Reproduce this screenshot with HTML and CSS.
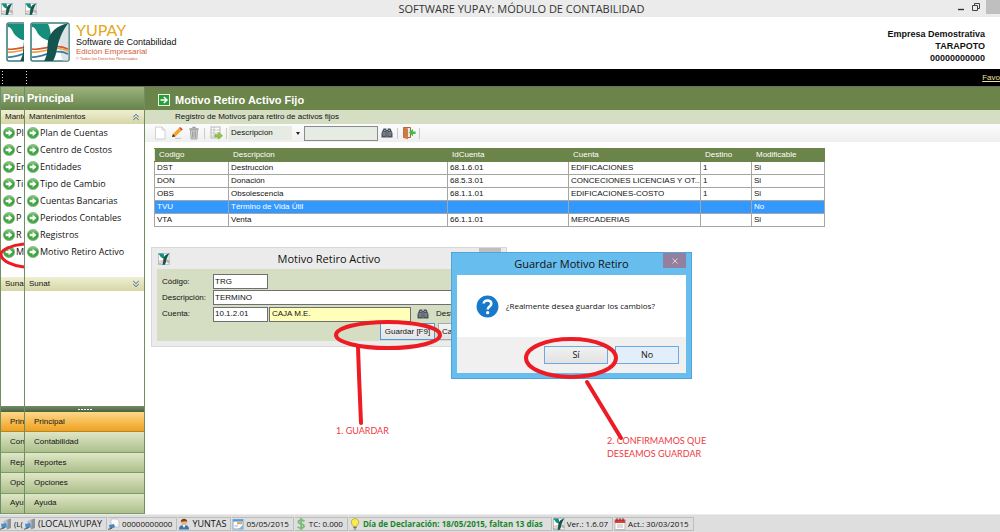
FILE: index.html
```html
<!DOCTYPE html>
<html lang="es">
<head>
<meta charset="utf-8">
<title>SOFTWARE YUPAY: MÓDULO DE CONTABILIDAD</title>
<link rel="stylesheet" href="styles.css">
</head>
<body>
<svg class="defs" aria-hidden="true">
  <defs>
    <linearGradient id="gball" x1="0" y1="0" x2="0" y2="1"><stop offset="0" stop-color="#8fcf86"/><stop offset=".5" stop-color="#2f9a36"/><stop offset="1" stop-color="#4cb34c"/></linearGradient>
    <symbol id="logo" viewBox="0 0 40 40">
      <rect x="1" y="1" width="38" height="38" rx="2" fill="#fff" stroke="#3d7f7c" stroke-width="1.6"/>
      <path d="M37 2 H38.4 V38.4 H33 C29 30 28 20 32 10Z" fill="#dde3e5"/>
      <path d="M2 27 C13 29 24 20 38 27" fill="none" stroke="#d8572c" stroke-width="1.7"/>
      <path d="M2 30 C13 32 24 22 38 29" fill="none" stroke="#eda13b" stroke-width="1.7"/>
      <path d="M2 35 C14 36 24 25 38 32" fill="none" stroke="#377aa8" stroke-width="1.7"/>
      <path d="M2 2 H18 C20 6 21 11 21 19 C14 18 9 14 7 10 C6 7 4 5 2 5Z" fill="#178d7b"/>
      <path d="M38 1.4 C32 9 29 18 27 27 C26 32 25 36 23 39 H14 C18 33 17 26 18 19 C20 10 27 3 38 1.4Z" fill="#14564f"/>
    </symbol>
    <symbol id="go" viewBox="0 0 12 12">
      <circle cx="6" cy="6" r="5.6" fill="url(#gball)" stroke="#7fae7b" stroke-width=".7"/>
      <path d="M2.6 4.8 H5.6 V2.8 L9.6 6 L5.6 9.2 V7.2 H2.6Z" fill="#fff"/>
    </symbol>
    <symbol id="bino" viewBox="0 0 12 12">
      <path d="M2.5 1.5 H5.4 V3 H6.6 V1.5 H9.5 L11.5 6 V10.5 H.5 V6Z" fill="#4d535c"/>
      <path d="M1.5 6 H4.8 M7.2 6 H10.5 M2 8 H4.6 M7.4 8 H10 M3 3.6 H4.6 M7.4 3.6 H9" stroke="#a9b0ba" stroke-width=".9"/><path d="M6 4 V10.5" stroke="#8f969e" stroke-width=".8"/>
    </symbol>
    <symbol id="server" viewBox="0 0 12 12">
      <path d="M6 2 L11 0.5 V10 L7 11.5Z" fill="#8c949c"/><path d="M3.5 3 L7.5 2 V9 L4 10Z" fill="#b6bdc4"/>
      <path d="M1 6 L6 5 L7 9 L2 11Z" fill="#4f8fc6"/><path d="M0 11.3 L5 9.5" stroke="#555c66"/>
    </symbol>
    <symbol id="doc" viewBox="0 0 12 12">
      <path d="M3 1 H9 L11 3 V9 H3Z" fill="#fafafa" stroke="#aab3bb" stroke-width=".6"/>
      <path d="M1 7 L6 6 L7 9 L2 11.4Z" fill="#4a86bd"/><path d="M0 11.5 L4 10" stroke="#4c5866"/>
    </symbol>
    <symbol id="user" viewBox="0 0 12 12">
      <path d="M1 11.5 C1 8 3 7 6 7 S11 8 11 11.5Z" fill="#3f74ae"/><path d="M4.5 7 L6 10 L7.5 7Z" fill="#fff"/>
      <circle cx="6" cy="4" r="3" fill="#edb27c"/><path d="M2.8 4 C2.4 -.4 9.6 -.4 9.2 4 C8 2.5 5 3.6 2.8 4Z" fill="#7d3f17"/>
    </symbol>
    <symbol id="cal" viewBox="0 0 12 12">
      <rect x="1" y="1.5" width="10" height="9.5" fill="#fff" stroke="#6ba2cf" stroke-width=".9"/><path d="M1 2.6 H11" stroke="#5c9ad0" stroke-width="2"/>
      <path d="M5 5.2 H10" stroke="#e79a4a" stroke-width="2"/><path d="M2.5 8 H6" stroke="#a8cbe6" stroke-width="1.4"/><path d="M6.5 11 L11 7 V11Z" fill="#7fb2dc"/>
    </symbol>
    <symbol id="dollar" viewBox="0 0 12 12">
      <path d="M9.5 3.2 C8 1.8 3.4 1.6 3.4 4 C3.4 6.3 9 5.4 9 8 C9 10.6 4 10.3 2.6 8.8 M6.2 0 V12" fill="none" stroke="#7dbb7d" stroke-width="1.9"/>
    </symbol>
    <symbol id="bulb" viewBox="0 0 12 12">
      <path d="M6 .6 C9 .6 10 3 9.6 5 C9 7 7.8 7.2 7.6 8.6 H4.4 C4.2 7.2 3 7 2.4 5 C2 3 3 .6 6 .6Z" fill="#f8ed4d" stroke="#a79c25" stroke-width=".7"/>
      <path d="M4.4 9.4 H7.6 M4.8 11 H7.2" stroke="#6b6f74" stroke-width="1.1"/>
    </symbol>
    <symbol id="calred" viewBox="0 0 12 12">
      <rect x="1" y="2" width="10" height="9.4" fill="#fafafa" stroke="#b9a3a3" stroke-width=".7"/><path d="M.8 1.6 H11.2 V5 H.8Z" fill="#d9403b"/>
      <path d="M3 .2 V3 M6 .2 V3 M9 .2 V3" stroke="#7c2020"/><path d="M3 7 H9 M3 9 H9" stroke="#bbb"/>
    </symbol>
    <symbol id="page" viewBox="0 0 14 14"><path d="M2.5 1 H9 L12 4 V13 H2.5Z" fill="#fff" stroke="#d0d0d0"/><path d="M9 1 V4 H12" fill="none" stroke="#d0d0d0"/></symbol>
    <symbol id="pencil" viewBox="0 0 14 14">
      <path d="M2 11 L3 8 L9 2 L11.6 4.6 L5.4 10.4Z" fill="#f2a52c"/><path d="M9 2 L10.2 .9 L12.8 3.4 L11.6 4.6Z" fill="#d63f2c"/>
      <path d="M2 11 L3 8 L5.4 10.4Z" fill="#3b3023"/><path d="M5 12.4 H11" stroke="#c5c5c5"/>
    </symbol>
    <symbol id="trash" viewBox="0 0 14 14"><path d="M3.4 4 H10.6 L10 13 H4Z" fill="#cfcfcf" stroke="#9a9a9a" stroke-width=".8"/><path d="M2.4 3 H11.6 M5.4 1.4 H8.6" stroke="#9a9a9a" stroke-width="1.4"/><path d="M5.5 5.4 V11.6 M7 5.4 V11.6 M8.5 5.4 V11.6" stroke="#8e8e8e" stroke-width=".7"/></symbol>
    <symbol id="export" viewBox="0 0 14 14"><rect x="2" y="1" width="9" height="11" fill="#fff" stroke="#b5bab5"/><path d="M2 4 H11 M2 7 H11 M2 10 H8 M5 1 V12" stroke="#b5bab5" stroke-width=".8"/><path d="M6 8.4 H9.4 V6.4 L13.6 9.7 L9.4 13 V11 H6Z" fill="#94c83d" stroke="#6a9c22" stroke-width=".5"/></symbol>
    <symbol id="exit" viewBox="0 0 14 14"><path d="M1.5 1.5 H8.5 V11.5 H1.5Z" fill="#f0e6dc" stroke="#a8683c"/><path d="M1.5 1.5 L6 2.6 V13.2 L1.5 12Z" fill="#cf7a45"/><path d="M13.6 5.4 H11 V3 L6.8 6.6 L11 10.2 V8 H13.6Z" fill="#3fbf49"/></symbol>
    <symbol id="up" viewBox="0 0 8 8"><path d="M1.2 4 L4 1.4 L6.8 4 M1.2 7 L4 4.4 L6.8 7" fill="none" stroke="#4668a8"/></symbol>
    <symbol id="down" viewBox="0 0 8 8"><path d="M1.2 1 L4 3.6 L6.8 1 M1.2 4 L4 6.6 L6.8 4" fill="none" stroke="#4668a8"/></symbol>
  </defs>
</svg>

<div class="screen">
  <div class="app strip" aria-hidden="true">
    <div class="titlebar"><svg class="i12"><use href="#logo"/></svg></div>
    <div class="brandbar"><svg class="biglogo"><use href="#logo"/></svg></div>
    <div class="blackbar"><span class="grip"></span></div>
    <div class="body">
      <div class="sidebar">
        <div class="side-title">Prin</div>
        <div class="side-sec">Mante</div>
        <ul class="side-list">
          <li><svg class="i12"><use href="#go"/></svg>Pl</li>
          <li><svg class="i12"><use href="#go"/></svg>C</li>
          <li><svg class="i12"><use href="#go"/></svg>Er</li>
          <li><svg class="i12"><use href="#go"/></svg>Ti</li>
          <li><svg class="i12"><use href="#go"/></svg>C</li>
          <li><svg class="i12"><use href="#go"/></svg>P</li>
          <li><svg class="i12"><use href="#go"/></svg>R</li>
          <li><svg class="i12"><use href="#go"/></svg>M</li>
        </ul>
        <div class="side-sec">Suna</div>
        <div class="side-fill"></div>
        <div class="splitter"></div>
        <div class="side-nav">
          <div class="nav-btn on">Prin</div>
          <div class="nav-btn">Con</div>
          <div class="nav-btn">Rep</div>
          <div class="nav-btn">Opc</div>
          <div class="nav-btn">Ayu</div>
        </div>
      </div>
    </div>
    <div class="status"><span class="cell"><svg class="i12"><use href="#server"/></svg>(L(</span></div>
  </div>

  <div class="app main">
    <header class="titlebar">
      <svg class="i12"><use href="#logo"/></svg>
      <h1 class="app-title">SOFTWARE YUPAY: MÓDULO DE CONTABILIDAD</h1>
      <div class="winctl">
        <button type="button" class="ctl" aria-label="Minimizar"><svg class="i10" viewBox="0 0 10 10"><path d="M2 7.5 H8" stroke="#333" stroke-width="1.4"/></svg></button>
        <button type="button" class="ctl" aria-label="Restaurar"><svg class="i10" viewBox="0 0 10 10"><path d="M1.5 3.5 H6.5 V8.5 H1.5Z M3.5 3 V1.5 H8.5 V6.5 H7" fill="none" stroke="#444"/></svg></button>
        <button type="button" class="ctl close" aria-label="Cerrar"></button>
      </div>
    </header>
    <div class="brandbar">
      <svg class="biglogo"><use href="#logo"/></svg>
      <div class="brand">
        <span class="b1">YUPAY</span>
        <span class="b2">Software de Contabilidad</span>
        <span class="b3">Edición Empresarial</span>
        <span class="b4">© Todos los Derechos Reservados</span>
      </div>
      <div class="company"><span>Empresa Demostrativa</span><span>TARAPOTO</span><span>00000000000</span></div>
    </div>
    <div class="blackbar"><span class="grip"></span><a class="fav" href="#">Favo</a></div>
    <div class="body">
      <nav class="sidebar">
        <div class="side-title">Principal</div>
        <div class="side-sec">Mantenimientos<svg class="i8"><use href="#up"/></svg></div>
        <ul class="side-list">
          <li><svg class="i12"><use href="#go"/></svg><a href="#">Plan de Cuentas</a></li>
          <li><svg class="i12"><use href="#go"/></svg><a href="#">Centro de Costos</a></li>
          <li><svg class="i12"><use href="#go"/></svg><a href="#">Entidades</a></li>
          <li><svg class="i12"><use href="#go"/></svg><a href="#">Tipo de Cambio</a></li>
          <li><svg class="i12"><use href="#go"/></svg><a href="#">Cuentas Bancarias</a></li>
          <li><svg class="i12"><use href="#go"/></svg><a href="#">Periodos Contables</a></li>
          <li><svg class="i12"><use href="#go"/></svg><a href="#">Registros</a></li>
          <li><svg class="i12"><use href="#go"/></svg><a href="#">Motivo Retiro Activo</a></li>
        </ul>
        <div class="side-sec">Sunat<svg class="i8"><use href="#down"/></svg></div>
        <div class="side-fill"></div>
        <div class="splitter"><span class="dots"></span></div>
        <div class="side-nav">
          <button type="button" class="nav-btn on">Principal</button>
          <button type="button" class="nav-btn">Contabilidad</button>
          <button type="button" class="nav-btn">Reportes</button>
          <button type="button" class="nav-btn">Opciones</button>
          <button type="button" class="nav-btn">Ayuda</button>
        </div>
      </nav>
      <main class="content">
        <h2 class="page-title"><svg class="i12" viewBox="0 0 12 12"><rect x=".5" y=".5" width="11" height="11" fill="#28a03a" stroke="#e6f3e4"/><path d="M2.5 6 H8.6 M5.8 3 L9 6 L5.8 9" fill="none" stroke="#fff" stroke-width="1.5"/></svg>Motivo Retiro Activo Fijo</h2>
        <p class="page-sub">Registro de Motivos para retiro de activos fijos</p>
        <div class="toolbar">
          <button type="button" class="tool" aria-label="Nuevo"><svg class="i14"><use href="#page"/></svg></button>
          <button type="button" class="tool" aria-label="Editar"><svg class="i14"><use href="#pencil"/></svg></button>
          <button type="button" class="tool" aria-label="Eliminar"><svg class="i14"><use href="#trash"/></svg></button>
          <span class="sep"></span>
          <button type="button" class="tool" aria-label="Exportar"><svg class="i14"><use href="#export"/></svg></button>
          <span class="sep"></span>
          <span class="combo"><select class="field" aria-label="Campo"><option>Descripcion</option></select></span>
          <input class="search" type="text" aria-label="Buscar">
          <button type="button" class="tool" aria-label="Buscar"><svg class="i12"><use href="#bino"/></svg></button>
          <span class="sep"></span>
          <button type="button" class="tool" aria-label="Salir"><svg class="i14"><use href="#exit"/></svg></button>
          <span class="sep"></span>
        </div>
        <table class="grid">
          <colgroup><col class="c1"><col class="c2"><col class="c3"><col class="c4"><col class="c5"><col class="c6"></colgroup>
          <thead><tr><th>Codigo</th><th>Descripcion</th><th>IdCuenta</th><th>Cuenta</th><th>Destino</th><th>Modificable</th></tr></thead>
          <tbody>
            <tr><td>DST</td><td>Destrucción</td><td>68.1.6.01</td><td>EDIFICACIONES</td><td>1</td><td>Si</td></tr>
            <tr><td>DON</td><td>Donación</td><td>68.5.3.01</td><td>CONCECIONES LICENCIAS Y OT...</td><td>1</td><td>Si</td></tr>
            <tr><td>OBS</td><td>Obsolescencia</td><td>68.1.1.01</td><td>EDIFICACIONES-COSTO</td><td>1</td><td>Si</td></tr>
            <tr class="sel"><td>TVU</td><td>Término de Vida Útil</td><td></td><td></td><td></td><td>No</td></tr>
            <tr><td>VTA</td><td>Venta</td><td>66.1.1.01</td><td>MERCADERIAS</td><td></td><td>Si</td></tr>
          </tbody>
        </table>
      </main>
    </div>
    <footer class="status">
      <span class="cell word"><svg class="i12"><use href="#server"/></svg>(LOCAL)\YUPAY</span>
      <span class="cell"><svg class="i12"><use href="#doc"/></svg>00000000000</span>
      <span class="cell word"><svg class="i12"><use href="#user"/></svg>YUNTAS</span>
      <span class="cell"><svg class="i12"><use href="#cal"/></svg>05/05/2015</span>
      <span class="cell"><svg class="i12"><use href="#dollar"/></svg>TC: 0.000</span>
      <span class="cell due"><svg class="i12"><use href="#bulb"/></svg>Día de Declaración: 18/05/2015, faltan 13 días</span>
      <span class="cell"><svg class="i12"><use href="#logo"/></svg>Ver.: 1.6.07</span>
      <span class="cell"><svg class="i12"><use href="#calred"/></svg>Act.: 30/03/2015</span>
    </footer>
  </div>

  <section class="win edit" aria-label="Motivo Retiro Activo">
    <div class="win-head"><svg class="i12"><use href="#logo"/></svg><h3 class="win-title">Motivo Retiro Activo</h3><button type="button" class="win-x" aria-label="Cerrar"></button></div>
    <form class="form">
      <div class="row"><label class="lab" for="cod">Código:</label><input class="inp short" id="cod" type="text" value="TRG"></div>
      <div class="row"><label class="lab" for="des">Descripción:</label><input class="inp wide" id="des" type="text" value="TERMINO"></div>
      <div class="row"><label class="lab" for="cta">Cuenta:</label><input class="inp short" id="cta" type="text" value="10.1.2.01"><input class="inp name" type="text" aria-label="Nombre de cuenta" value="CAJA M.E."><button type="button" class="tool find" aria-label="Buscar cuenta"><svg class="i12"><use href="#bino"/></svg></button><span class="dest">Dest</span></div>
      <div class="row acts"><button type="button" class="btn focus">Guardar [F9]</button><button type="button" class="btn cancel" aria-label="Cancelar">Ca</button></div>
    </form>
  </section>

  <section class="win confirm" role="dialog" aria-label="Guardar Motivo Retiro">
    <div class="c-head"><h3 class="win-title">Guardar Motivo Retiro</h3><button type="button" class="c-x" aria-label="Cerrar"><svg class="i8" viewBox="0 0 8 8"><path d="M1.5 1.5 L6.5 6.5 M6.5 1.5 L1.5 6.5" stroke="#e5ced8"/></svg></button></div>
    <div class="c-body">
      <svg class="ask" viewBox="0 0 24 24" aria-hidden="true"><circle cx="12" cy="12" r="11.4" fill="#1979ca"/><path d="M8 8.8 C8 4.6 16 4.6 16 9 C16 12 12.2 11.8 12.2 15" fill="none" stroke="#fff" stroke-width="2.6"/><circle cx="12.2" cy="18.4" r="1.7" fill="#fff"/></svg>
      <p class="msg">¿Realmente desea guardar los cambios?</p>
    </div>
    <div class="c-foot"><button type="button" class="cbtn yes">Sí</button><button type="button" class="cbtn no">No</button></div>
  </section>

  <p class="note n1">1. GUARDAR</p>
  <p class="note n2">2. CONFIRMAMOS QUE<br>DESEAMOS GUARDAR</p>
  <svg class="marks" width="1000" height="532" viewBox="0 0 1000 532" aria-hidden="true">
    <g fill="none" stroke="#ed1c24" stroke-width="4" stroke-linecap="round">
      <path d="M24 244 C12 245 0 250 1 255 C2 261 13 266 24 267" stroke-linecap="butt" stroke-width="3"/>
      <ellipse cx="388" cy="335" rx="52" ry="13"/>
      <path d="M358 347 L359 375 L361 423"/>
      <ellipse cx="571" cy="358" rx="45" ry="19"/>
      <path d="M587 382 L621 438"/>
    </g>
  </svg>
</div>
</body>
</html>
```
FILE: styles.css
```css
* { box-sizing: border-box; }
body { margin: 0; background: #fff; color: #111; font-family: "Liberation Sans", Arial, sans-serif; font-size: 8px; line-height: 12px; }
h1, h2, h3, p, ul { margin: 0; padding: 0; font-weight: normal; }
ul { list-style: none; }
button, input, select { font: inherit; color: inherit; margin: 0; padding: 0; border: 0; border-radius: 0; background: none; }
a { color: inherit; text-decoration: none; }
svg { flex: none; display: block; }
.defs { position: absolute; width: 0; height: 0; }
.i8 { width: 8px; height: 8px; }
.i10 { width: 10px; height: 10px; }
.i12 { width: 12px; height: 12px; }
.i14 { width: 14px; height: 14px; }

.screen { position: relative; display: flex; height: 100vh; min-height: 532px; overflow: hidden; }
.app { display: flex; flex-direction: column; min-width: 0; overflow: hidden; }
.strip { flex: none; width: 24px; white-space: nowrap; }
.main { flex: 1; }

.titlebar { flex: none; display: grid; grid-template-columns: 62px 1fr 44px; align-items: center; height: 17px; padding-left: 1px; background: #ebebeb; }
.app-title { font-family: "Open Sans", sans-serif; font-size: 11px; line-height: 16px; text-align: center; color: #333; }
.winctl { display: flex; height: 17px; align-items: flex-start; }
.ctl { flex: none; width: 10px; height: 14px; margin-right: 5px; display: grid; place-items: center; }
.ctl.close { flex: 1; margin: 0; background: #bfbfbf; }

.brandbar { flex: none; display: flex; height: 52px; padding: 5px 15px 0 6px; background: #fff; }
.biglogo { width: 40px; height: 40px; }
.brand { display: flex; flex-direction: column; flex: 1; padding: 1px 0 0 6px; }
.b1 { font-family: Lato, sans-serif; font-size: 16px; line-height: 14px; color: #e2a820; }
.b2 { font-size: 9px; line-height: 10px; }
.b3 { font-size: 8px; line-height: 9px; color: #d3603c; }
.b4 { font-size: 4px; line-height: 5px; color: #d3603c; }
.company { display: flex; flex-direction: column; padding-top: 6px; text-align: right; font-weight: bold; font-size: 9px; }

.blackbar { flex: none; display: flex; align-items: center; justify-content: space-between; height: 18px; padding-left: 2px; background: #000; border-bottom: 1px solid #6b6b6b; }
.grip { width: 1px; height: 14px; background: repeating-linear-gradient(#ddd 0 1px, #000 1px 3px); }
.fav { color: #e9e69a; text-decoration: underline; }

.body { flex: 1; display: flex; min-height: 0; }
.sidebar { flex: none; display: flex; flex-direction: column; width: 121px; border-left: 1px solid #6f8f63; border-right: 1px solid #6f8f63; }
.strip .sidebar { flex: 1; width: auto; border-right: 0; overflow: hidden; }
.side-title { height: 23px; padding-left: 2px; font-weight: bold; font-size: 11px; line-height: 22px; color: #fff; background: linear-gradient(#9db27c, #66834c); }
.side-sec { display: flex; align-items: center; justify-content: space-between; height: 14px; padding: 0 4px; background: linear-gradient(#efeed2, #d6d7a6); }
.side-list { height: 153px; font-family: "Open Sans", sans-serif; font-size: 9px; }
.side-list li { display: flex; align-items: center; gap: 1px; height: 17px; padding-left: 2px; }
.side-fill { flex: 1; }
.splitter { display: grid; place-items: center; height: 6px; background: linear-gradient(#758c6b, #47613f); }
.dots { width: 14px; height: 1px; background: repeating-linear-gradient(90deg, #fff 0 2px, transparent 2px 3px); }
.side-nav { display: flex; flex-direction: column; height: 102px; }
.nav-btn { flex: 1; display: flex; align-items: center; padding-left: 9px; border-bottom: 1px solid #7d9a6b; background: linear-gradient(#dfe7c6, #adbf8c); text-align: left; }
.nav-btn.on { background: linear-gradient(#fdd888, #efa120); border-color: #b5852c; }

.content { flex: 1; min-width: 0; }
.page-title { display: flex; align-items: center; gap: 5px; height: 23px; padding: 2px 0 0 13px; font-weight: bold; font-size: 11px; line-height: 16px; color: #fff; background: #6a8449; }
.page-sub { height: 14px; padding-left: 30px; line-height: 14px; background: #d5ddc3; }
.toolbar { display: flex; align-items: center; height: 18px; padding-left: 6px; background: linear-gradient(#fcfcfc, #efefef); }
.tool { display: grid; place-items: center; width: 17px; height: 16px; }
.sep { width: 1px; height: 11px; margin: 0 2px; background: #ccc; }
.combo { display: flex; }
.combo::after { content: ""; align-self: center; margin: 0 4px; border: 2px solid transparent; border-top: 3px solid #222; border-bottom: 0; }
.field { width: 63px; height: 14px; padding-left: 2px; appearance: none; background: #e6ece4; }
.search { width: 74px; height: 15px; border: 1px solid #8b8b8b; background: #e6ece4; }

.grid { width: 671px; margin: 6px 0 0 9px; table-layout: fixed; border-collapse: collapse; }
.c1 { width: 74px; } .c2 { width: 219px; } .c3 { width: 121px; } .c4 { width: 132px; } .c5 { width: 51px; }
.grid th, .grid td { height: 13px; padding: 0 2px; border: 1px solid #a5a5a5; line-height: 12px; text-align: left; font-weight: normal; white-space: nowrap; overflow: hidden; }
.grid th { padding-left: 4px; color: #fff; background: #6a8449; border-color: #6a8449 #6a8449 #6a8449 #e5e9df; }
.grid .sel td { color: #fff; background: #3399ff; }

.status { flex: none; display: flex; align-items: center; height: 18px; background: #dedede; border-top: 1px solid #ececec; font-family: "Open Sans", sans-serif; font-size: 8px; white-space: nowrap; }
.cell { display: flex; align-items: center; gap: 2px; height: 14px; padding-right: 4px; margin-right: 1px; border: 1px solid #bdbdbd; border-left: 0; }
.word { font-size: 9px; }
.due { padding-right: 8px; font-weight: bold; color: #16862a; }

.win { position: absolute; }
.win-title { flex: 1; font-family: "Open Sans", sans-serif; font-size: 11px; line-height: 16px; text-align: center; }
.edit { left: 151px; top: 247px; width: 356px; padding: 0 5px 5px; background: #ebebeb; border: 1px solid #d8d8d8; }
.win-head { display: flex; align-items: center; height: 21px; padding-left: 1px; }
.win-head .win-title { padding-left: 9px; }
.win-x { align-self: flex-start; width: 22px; height: 12px; background: #bfbfbf; }
.form { display: flex; flex-direction: column; gap: 1px; padding: 5px 0 1px 5px; background: #d5ddc3; }
.row { display: flex; align-items: center; }
.lab { width: 51px; }
.inp { height: 15px; padding: 0 1px 1px; border: 1px solid #6f6f6f; background: #fff; }
.short { width: 55px; }
.wide { flex: 1; }
.name { width: 142px; margin-left: 1px; padding-left: 2px; background: #ffffb9; }
.find { margin: 0 5px 0 3px; }
.acts { padding-left: 218px; gap: 3px; }
.btn { width: 55px; height: 17px; border: 1px solid #a8a8a8; background: linear-gradient(#f4f4f4, #e3e3e3); white-space: nowrap; }
.btn.focus { border-color: #4d98dd; }
.cancel { padding-left: 3px; text-align: left; }

.confirm { left: 451px; top: 252px; width: 241px; padding: 0 5px 5px; background: #67bdee; border: 1px solid #4fa5d6; }
.c-head { display: flex; align-items: flex-start; height: 22px; }
.c-head .win-title { padding: 3px 0 0 23px; }
.c-x { width: 23px; height: 15px; display: grid; place-items: center; background: #93809f; }
.c-body { display: flex; align-items: center; gap: 7px; height: 62px; padding-left: 19px; background: #fff; }
.ask { width: 23px; height: 23px; }
.msg { font-family: "Open Sans", sans-serif; font-size: 8px; }
.c-foot { display: flex; justify-content: flex-end; gap: 7px; height: 36px; padding: 9px 7px; background: #f0f0f0; }
.cbtn { width: 64px; height: 18px; border: 1px solid #6aa9e4; background: linear-gradient(#f1f1f1, #e2e2e2); font-family: "Open Sans", sans-serif; font-size: 9px; line-height: 14px; }
.cbtn.no { background: #e2effa; }

.note { position: absolute; font-family: Lato, sans-serif; font-size: 9px; line-height: 13px; color: #ee3a40; white-space: nowrap; }
.n1 { left: 336px; top: 424px; }
.n2 { left: 607px; top: 434px; }
.marks { position: absolute; left: 0; top: 0; pointer-events: none; }
```
